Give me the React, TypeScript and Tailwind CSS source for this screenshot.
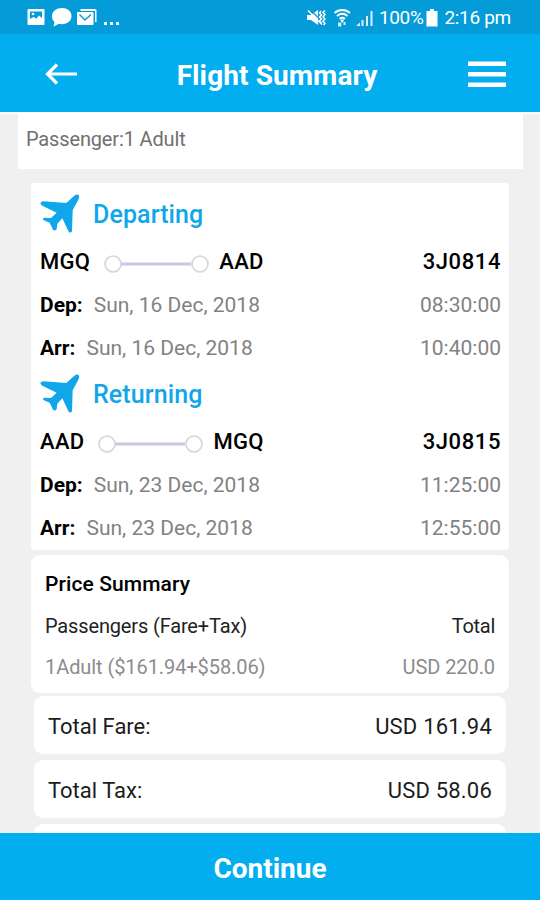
import type { ReactNode } from "react";

type Leg = {
  title: string;
  from: string;
  to: string;
  flight: string;
  date: string;
  dep: string;
  arr: string;
};

const legs: Leg[] = [
  {
    title: "Departing",
    from: "MGQ",
    to: "AAD",
    flight: "3J0814",
    date: "Sun, 16 Dec, 2018",
    dep: "08:30:00",
    arr: "10:40:00",
  },
  {
    title: "Returning",
    from: "AAD",
    to: "MGQ",
    flight: "3J0815",
    date: "Sun, 23 Dec, 2018",
    dep: "11:25:00",
    arr: "12:55:00",
  },
];

function StatusBar() {
  return (
    <div className="flex h-[34px] shrink-0 items-center justify-between bg-[#049cd8] pl-[27px] pr-[29px] text-white">
      <svg width="94" height="22" viewBox="0 0 94 22" fill="currentColor">
        <path
          fillRule="evenodd"
          d="M1.500 3h15a1 1 0 0 1 1 1v14a1 1 0 0 1-1 1h-15a1 1 0 0 1-1-1V4a1 1 0 0 1 1-1ZM3 5.500V13l3.500-2 3 1.500L12 9.500l3 2.500V5.500Z"
        />
        <circle cx="6" cy="8" r="1.300" />
        <path d="M35 2c5.500 0 9.500 3.300 9.500 8s-4 8.200-9.500 8.200c-1 0-2-.1-3-.4L26.500 20.500l1-4.500C25.700 14.500 25 12.500 25 10c0-4.700 4.500-8 10-8Z" />
        <path d="M53.500 3H68a1.500 1.500 0 0 1 1.500 1.500V16H68V5H53.500Z" />
        <rect x="50" y="6" width="16.500" height="13" rx="1" />
        <path d="m52.500 8.500 5.500 5.500 6-5.500" fill="none" stroke="#049cd8" strokeWidth="1.400" />
        <path d="M77 16h3v3h-3zM83 16h3v3h-3zM89 16h3v3h-3z" />
      </svg>
      <div className="flex items-center pt-px">
        <svg width="68" height="22" viewBox="0 0 68 22" fill="currentColor">
          <path d="M0 8h4l7-5v15l-7-5H0Z" />
          <path d="m2.500 2 15 15" stroke="#049cd8" strokeWidth="1.300" />
          <path
            d="m1 3.500 14 14M14 4l-1.500 2 2 2-2 2 2 2-2 2 2 2M18 3.500l-2 2 2 2-2 2.500 2 2-2 2.500 2 2-1.500 1.500"
            fill="none"
            stroke="currentColor"
            strokeWidth="1.500"
          />
          <path
            d="M27.500 6c4.500-4 11-4 15.500 0M30 9c3.200-2.700 7.300-2.700 10.500 0M32.500 11.800c1.800-1.300 3.700-1.300 5.500 0"
            fill="none"
            stroke="currentColor"
            strokeWidth="1.900"
          />
          <path d="m35.200 16-2.200-3.500h4.400Z" />
          <path d="M31 19.500v-4h3.300v4zM36.500 18v-3h2v3z" opacity=".85" />
          <path d="M49 19l4-3.500v3.500ZM54.500 13h2v6h-2zM59 9h2v10h-2zM63.500 4h2v15h-2z" opacity=".85" />
        </svg>
        <span className="ml-1 text-[19px] leading-[22px] tracking-[-0.4px]">100%</span>
        <svg width="12" height="22" viewBox="0 0 12 22" className="ml-[3px]" fill="currentColor">
          <path d="M4 2h4v2h3.500v15.500H.5V4H4Z" />
        </svg>
        <span className="ml-1.5 text-[19px] leading-[22px] tracking-[-0.3px]">2:16 pm</span>
      </div>
    </div>
  );
}

function Header() {
  return (
    <div className="flex h-[78px] shrink-0 items-center justify-between bg-[#02aef0] pl-[45px] pr-[34px] text-white">
      <svg width="33" height="24" viewBox="0 0 33 24" className="mt-px" fill="none" stroke="currentColor" strokeWidth="3.200">
        <path d="M12 2.500 2.500 12l9.500 9.500M2.500 12h29.500" />
      </svg>
      <h1 className="ml-2 pt-[5px] text-[28px] font-bold leading-8 tracking-[0.1px]">Flight Summary</h1>
      <svg width="38" height="28" viewBox="0 0 38 28" className="mt-px" fill="currentColor">
        <path d="M0 1.500h38v4.500H0zM0 12h38v4.500H0zM0 22.500h38v4.500H0z" />
      </svg>
    </div>
  );
}

function PlaneIcon() {
  return (
    <svg width="42" height="40" viewBox="15 15 126 120" fill="#0fa7ea">
      <path d="M131 18Q126 14 117 21L94 42 25 37Q18 37 16 43 17 47 22 50L65 71 48 87 28 86Q22 88 25 93L44 101 54 122Q60 127 65 121L67 104 82 88 101 128Q106 134 111 127L113 64 128 36Q135 24 131 18Z" />
    </svg>
  );
}

function RouteLine() {
  return (
    <svg width="106" height="20" viewBox="0 0 106 20" className="mt-[5px]" fill="#fff">
      <path d="M18 10h70" stroke="#c5c9e3" strokeWidth="2.800" />
      <circle cx="10" cy="10" r="8" stroke="#d6d6da" strokeWidth="1.600" />
      <circle cx="97" cy="10" r="8" stroke="#d6d6da" strokeWidth="1.600" />
    </svg>
  );
}

function FlightLeg({ leg }: { leg: Leg }) {
  return (
    <section className="text-[21px]">
      <div className="flex h-[49px] items-center">
        <PlaneIcon />
        <h2 className="ml-[11px] pt-0.5 text-[25px] font-medium tracking-[0.1px] text-[#0fa7ea]">{leg.title}</h2>
      </div>
      <div className="flex h-[46px] items-center text-[22px] font-medium text-black">
        <span className="tracking-[0.3px]">{leg.from}</span>
        <span className="ml-[13px] mr-[10px]">
          <RouteLine />
        </span>
        <span className="tracking-[0.3px]">{leg.to}</span>
        <span className="ml-auto tracking-[0.6px]">{leg.flight}</span>
      </div>
      <div className="flex h-[43px] items-center pt-px text-[#828282]">
        <span className="mr-[11px] font-bold text-black">Dep:</span>
        <span>{leg.date}</span>
        <span className="ml-auto">{leg.dep}</span>
      </div>
      <div className="flex h-[42px] items-center pt-0.5 text-[#828282]">
        <span className="mr-[11px] font-bold text-black">Arr:</span>
        <span>{leg.date}</span>
        <span className="ml-auto">{leg.arr}</span>
      </div>
    </section>
  );
}

function TotalCard({ label, children }: { label: string; children: ReactNode }) {
  return (
    <div className="mx-[34px] flex h-[58px] shrink-0 items-center justify-between rounded-[9px] bg-white px-3.5 pt-0.5 text-[22px] text-[#1c1c1c]">
      <span>{label}</span>
      <span className="tracking-[0.2px]">{children}</span>
    </div>
  );
}

export default function App() {
  return (
    <div className="flex h-[900px] w-[540px] flex-col overflow-hidden bg-[#f0f0f0] font-['Roboto',sans-serif]">
      <StatusBar />
      <Header />
      <main className="flex min-h-0 flex-1 flex-col overflow-hidden border-t-2 border-white">
        <div className="ml-[18px] mr-[17px] h-[55px] shrink-0 bg-white px-2 pt-[11px] text-[20px] leading-7 tracking-[-0.15px] text-[#707070]">
          Passenger:1 Adult
        </div>
        <div className="mx-[31px] mt-3.5 h-[367px] shrink-0 rounded-[3px] bg-white pl-[9px] pr-2 pt-1.5">
          {legs.map((leg) => (
            <FlightLeg key={leg.title} leg={leg} />
          ))}
        </div>
        <div className="mx-[31px] mt-[5px] h-[138px] shrink-0 rounded-[9px] bg-white px-3.5 pt-2">
          <h2 className="flex h-[42px] items-center pt-0.5 text-[21px] font-medium tracking-[0.1px] text-black">
            Price Summary
          </h2>
          <div className="flex h-[41px] items-center justify-between text-[20px] text-[#222]">
            <span className="tracking-[-0.15px]">Passengers (Fare+Tax)</span>
            <span className="tracking-[-0.3px]">Total</span>
          </div>
          <div className="flex h-[41px] items-center justify-between text-[20px] tracking-[-0.08px] text-[#8c8c8c]">
            <span>1Adult ($161.94+$58.06)</span>
            <span>USD 220.0</span>
          </div>
        </div>
        <div className="mt-[3px] flex flex-col gap-1.5">
          <TotalCard label="Total Fare:">USD 161.94</TotalCard>
          <TotalCard label="Total Tax:">USD 58.06</TotalCard>
          {/* next card peeks out above the button */}
          <div className="mx-[34px] h-[58px] shrink-0 rounded-[9px] bg-white" />
        </div>
      </main>
      <button className="h-[67px] shrink-0 bg-[#02aef0] pt-1 text-[28px] font-bold text-white">Continue</button>
    </div>
  );
}
